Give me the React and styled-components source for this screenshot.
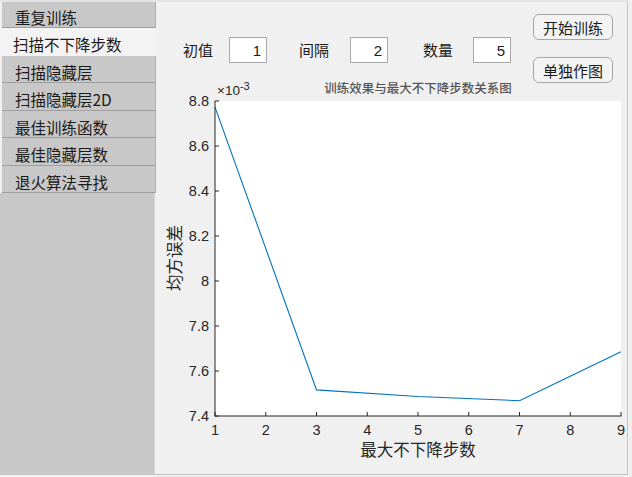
import React from "react";
import styled, { createGlobalStyle } from "styled-components";

const Global = createGlobalStyle`
  html, body { margin: 0; padding: 0; background: #f0f0f0; }
  body { font-family: "Noto Sans CJK SC", "Liberation Sans", sans-serif; }
  * { box-sizing: border-box; }
`;

const CJK = `"Microsoft YaHei", "Noto Sans CJK SC", sans-serif`;
const NUM = `"Liberation Sans", Arial, sans-serif`;

const Window = styled.div`
  width: 628px;
  height: 475px;
  display: flex;
  background: #f0f0f0;
  border-top: 2px solid #e4e4e4;
  border-right: 1px solid #c6c6c6;
  border-bottom: 1px solid #c6c6c6;
`;

const Sidebar = styled.div`
  width: 156px;
  display: flex;
  flex-direction: column;
`;

const Tab = styled.div`
  height: ${(p) => p.$h}px;
  flex-shrink: 0;
  display: flex;
  align-items: center;
  padding: 5px 0 0 13px;
  font-family: ${CJK};
  font-size: 15.5px;
  color: #1a1a1a;
  background: ${(p) => (p.$active ? "#f3f3f3" : "#c8c8c8")};
  border-bottom: 1px solid ${(p) => (p.$active ? "#f3f3f3" : "#9e9e9e")};
  border-right: ${(p) => (p.$active ? "none" : "1px solid #b0b0b0")};
  margin-left: ${(p) => (p.$active ? 0 : 2)}px;
  white-space: nowrap;
`;

const Filler = styled.div`
  flex: 1;
  background: #c8c8c8;
  margin-right: 1px;
  border-right: 1px solid #d6d6d6;
`;

const Main = styled.div`
  flex: 1;
  display: flex;
  flex-direction: column;
`;

const TopRow = styled.div`
  height: 76px;
  flex-shrink: 0;
  display: flex;
  align-items: flex-start;
  padding-top: 12px;
`;

const Controls = styled.div`
  display: flex;
  align-items: center;
  margin-top: 23px;
  margin-left: 27px;
`;

const Label = styled.span`
  font-family: ${CJK};
  font-size: 15px;
  color: #1a1a1a;
  width: ${(p) => p.$w}px;
  margin-left: ${(p) => p.$ml || 0}px;
  padding-bottom: 2px;
`;

const NumBox = styled.div`
  width: 38px;
  height: 26px;
  background: #fff;
  border: 1px solid #a8a8a8;
  font-family: ${NUM};
  font-size: 15px;
  color: #1a1a1a;
  display: flex;
  align-items: center;
  justify-content: flex-end;
  padding-right: 5px;
`;

const Buttons = styled.div`
  display: flex;
  flex-direction: column;
  gap: 17px;
  margin-left: 22px;
`;

const Button = styled.div`
  width: 80px;
  height: 26px;
  border: 1px solid #a6a6a6;
  border-radius: 6px;
  background: #f3f3f3;
  font-family: ${CJK};
  font-size: 15px;
  color: #1a1a1a;
  display: flex;
  align-items: center;
  justify-content: center;
`;

const ChartSvg = styled.svg`
  display: block;
  width: 471px;
  height: 396px;
`;

const tabs = [
  ["重复训练", 26],
  ["扫描不下降步数", 28],
  ["扫描隐藏层", 27],
  ["扫描隐藏层2D", 28],
  ["最佳训练函数", 27],
  ["最佳隐藏层数", 28],
  ["退火算法寻找", 27],
];

const X0 = 215, X1 = 621, Y0 = 101, Y1 = 416;
const xs = (v) => X0 + ((v - 1) / 8) * (X1 - X0);
const ys = (v) => Y1 - ((v - 7.4) / 1.4) * (Y1 - Y0);
const data = [
  [1, 8.773],
  [3, 7.516],
  [5, 7.487],
  [7, 7.468],
  [9, 7.686],
];
const yTicks = [7.4, 7.6, 7.8, 8, 8.2, 8.4, 8.6, 8.8];
const xTicks = [1, 2, 3, 4, 5, 6, 7, 8, 9];

function Chart() {
  return (
    <ChartSvg viewBox="156 78 471 396">
      <text x="418" y="93" textAnchor="middle" fontFamily={CJK} fontSize="12.5" fill="#555555" fontWeight="500">
        训练效果与最大不下降步数关系图
      </text>
      <text x="217" y="95" fontFamily={NUM} fontSize="13.5" fill="#262626">
        ×10<tspan dy="-5" fontSize="11">-3</tspan>
      </text>
      <rect x={X0} y={Y0} width={X1 - X0} height={Y1 - Y0} fill="#fff" />
      <polyline
        points={data.map(([x, y]) => `${xs(x)},${ys(y)}`).join(" ")}
        fill="none"
        stroke="#0072bd"
        strokeWidth="1.1"
      />
      <line x1={X0} y1={Y0} x2={X0} y2={Y1 + 0.5} stroke="#262626" strokeWidth="1" />
      <line x1={X0} y1={Y1} x2={X1 + 0.5} y2={Y1} stroke="#262626" strokeWidth="1" />
      {yTicks.map((t) => (
        <g key={t}>
          <line x1={X0} x2={X0 + 4} y1={ys(t)} y2={ys(t)} stroke="#262626" />
          <text x="209" y={ys(t) + 5} textAnchor="end" fontFamily={NUM} fontSize="14.5" fill="#262626">
            {String(t)}
          </text>
        </g>
      ))}
      {xTicks.map((t) => (
        <g key={t}>
          <line x1={xs(t)} x2={xs(t)} y1={Y1} y2={Y1 - 4} stroke="#262626" />
          <text x={xs(t)} y="435" textAnchor="middle" fontFamily={NUM} fontSize="14.5" fill="#262626">
            {t}
          </text>
        </g>
      ))}
      <text x="418" y="456" textAnchor="middle" fontFamily={CJK} fontSize="16.5" fill="#262626">
        最大不下降步数
      </text>
      <text
        transform="translate(181 258) rotate(-90)"
        textAnchor="middle"
        fontFamily={CJK}
        fontSize="16.5"
        fill="#262626"
      >
        均方误差
      </text>
    </ChartSvg>
  );
}

export default function App() {
  return (
    <>
      <Global />
      <Window>
        <Sidebar>
          {tabs.map(([t, h], i) => (
            <Tab key={t} $active={i === 1} $h={h}>
              {t}
            </Tab>
          ))}
          <Filler />
        </Sidebar>
        <Main>
          <TopRow>
            <Controls>
              <Label $w={46}>初值</Label>
              <NumBox>1</NumBox>
              <Label $w={51} $ml={32}>间隔</Label>
              <NumBox>2</NumBox>
              <Label $w={50} $ml={35}>数量</Label>
              <NumBox>5</NumBox>
            </Controls>
            <Buttons>
              <Button>开始训练</Button>
              <Button>单独作图</Button>
            </Buttons>
          </TopRow>
          <Chart />
        </Main>
      </Window>
    </>
  );
}
